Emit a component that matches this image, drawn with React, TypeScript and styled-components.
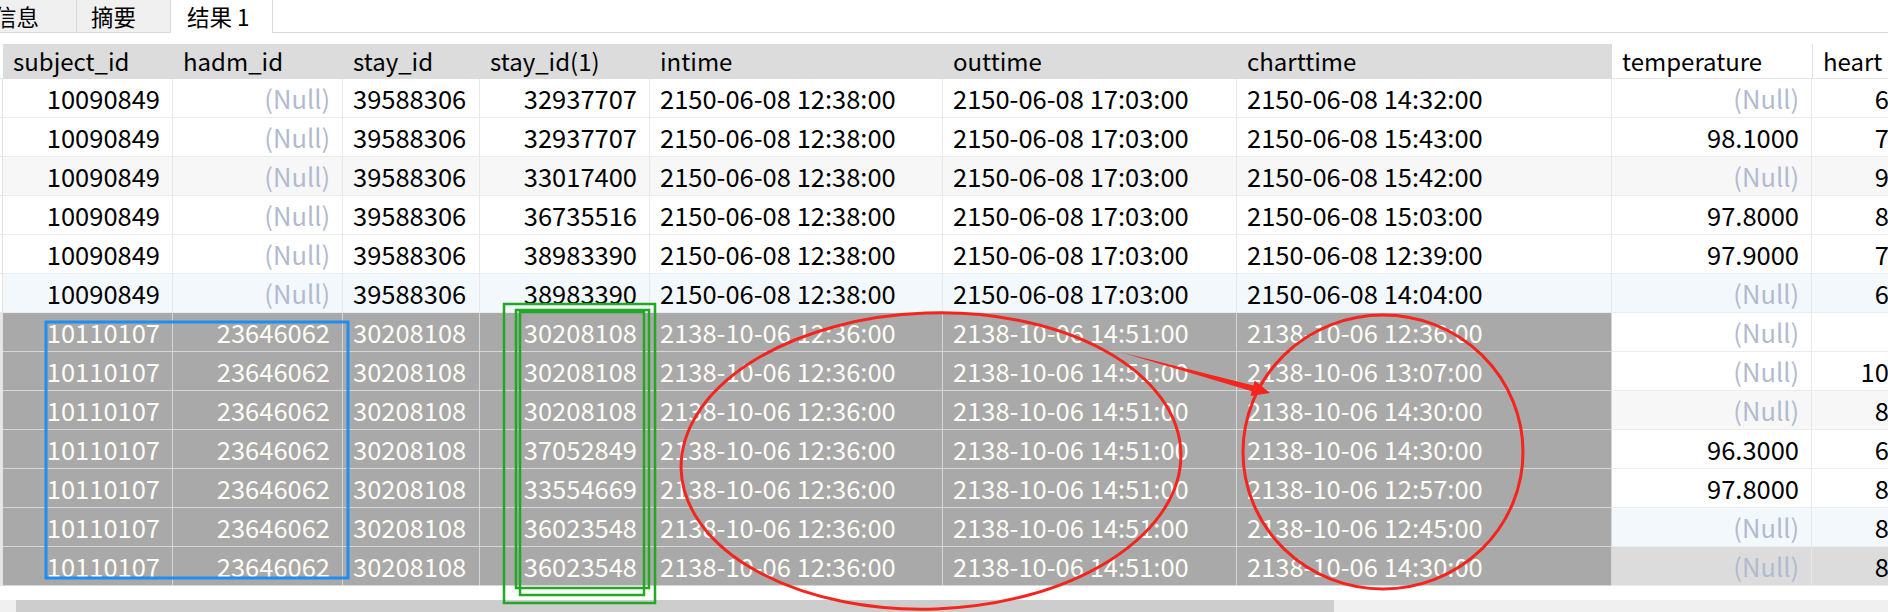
import React from 'react';
import styled, { createGlobalStyle } from 'styled-components';

const GlobalStyle = createGlobalStyle`
  html, body { margin: 0; padding: 0; background: #ffffff; }
  body { font-family: "Noto Sans CJK SC", "Noto Sans", sans-serif; }
`;

const COLS = [3, 170, 170, 137, 170, 293, 294, 375, 200, 104];
const TEMPLATE = COLS.map((c) => `${c}px`).join(' ');

const Page = styled.div`
  position: relative;
  width: 1888px;
  height: 612px;
  overflow: hidden;
  display: flex;
  flex-direction: column;
  background: #ffffff;
  font-family: "Noto Sans CJK SC", "Noto Sans", sans-serif;
`;

const TabBar = styled.div`
  flex: none;
  display: flex;
  height: 33px;
  box-shadow: inset 0 -1px 0 #d9d9d9;
`;

const TabStrip = styled.div`
  display: flex;
  margin-left: -20px;
`;

const Tab = styled.div<{ $w: number; $active?: boolean }>`
  box-sizing: border-box;
  width: ${(p) => p.$w}px;
  height: 33px;
  display: flex;
  align-items: center;
  padding: 0 0 0 ${(p) => (p.$active ? 16 : 14)}px;
  font-size: 22.5px;
  line-height: 1;
  color: #000;
  white-space: nowrap;
  background: ${(p) => (p.$active ? '#ffffff' : '#f0f0f0')};
  border-right: 1px solid #d9d9d9;
  box-shadow: ${(p) => (p.$active ? 'none' : 'inset 0 -1px 0 #d9d9d9')};
`;

const Grid = styled.div`
  flex: none;
  margin-top: 11px;
  display: flex;
  flex-direction: column;
  width: max-content;
`;

const HeaderRow = styled.div`
  display: grid;
  grid-template-columns: ${TEMPLATE};
  height: 35px;
`;

const HeadCell = styled.div<{ $plain?: boolean; $edge?: boolean }>`
  box-sizing: border-box;
  display: flex;
  align-items: center;
  padding: 0 0 0 10px;
  font-size: 24px;
  line-height: 1.2;
  color: #000;
  white-space: nowrap;
  overflow: hidden;
  background: ${(p) => (p.$plain ? '#ffffff' : '#dcdcdc')};
  border-bottom: 1px solid ${(p) => (p.$plain ? '#e6e6e6' : '#dcdcdc')};
  border-left: ${(p) => (p.$edge ? '1px solid #e2e2e2' : 'none')};
`;

const HeadStrip = styled.div`
  background: #ffffff;
  border-bottom: 1px solid #e6e6e6;
`;

const DataRow = styled.div`
  display: grid;
  grid-template-columns: ${TEMPLATE};
  height: 39px;
`;

const Strip = styled.div<{ $sel: boolean }>`
  box-sizing: border-box;
  background: ${(p) => (p.$sel ? '#e6e6e6' : '#ffffff')};
  border-right: 1px solid #e2e2e2;
  border-bottom: 1px solid #e8e8e8;
`;

const Cell = styled.div<{ $sel: boolean; $bg: string; $right: boolean; $null: boolean }>`
  box-sizing: border-box;
  display: flex;
  align-items: center;
  justify-content: ${(p) => (p.$right ? 'flex-end' : 'flex-start')};
  padding: 0 12px 0 10px;
  font-size: 25.5px;
  line-height: 1.2;
  white-space: nowrap;
  overflow: hidden;
  background: ${(p) => (p.$sel ? '#a9a9a9' : p.$bg)};
  color: ${(p) => (p.$sel ? '#fffdf6' : p.$null ? '#b2bad0' : '#000000')};
  border-right: 1px solid ${(p) => (p.$sel ? '#d6d6d6' : '#e8e8e8')};
  border-bottom: 1px solid ${(p) => (p.$sel ? '#d6d6d6' : '#ececec')};
`;

const HScroll = styled.div`
  flex: none;
  margin-top: 14px;
  height: 17px;
  display: flex;
  background: #f0f0f0;
`;

const ScrollBtn = styled.div`
  flex: none;
  width: 16px;
  height: 17px;
  display: flex;
  align-items: flex-end;
`;

const Thumb = styled.div`
  flex: none;
  width: 1318px;
  height: 17px;
  background: #cdcdcd;
`;

const Track = styled.div`
  flex: 1;
`;

const Overlay = styled.svg`
  position: absolute;
  left: 0;
  top: 0;
  pointer-events: none;
`;

type Row = {
  v: (string | null)[];
  bg: string;
  sel: boolean;
};

const A = '2150-06-08 12:38:00';
const B = '2150-06-08 17:03:00';
const C = '2138-10-06 12:36:00';
const D = '2138-10-06 14:51:00';

const WHITE = '#ffffff';
const GRAY = '#f7f7f7';
const BLUE = '#f3f8fd';
const CUR = '#dcdcdc';

const rows: Row[] = [
  { v: ['10090849', null, '39588306', '32937707', A, B, '2150-06-08 14:32:00', null, '68'], bg: WHITE, sel: false },
  { v: ['10090849', null, '39588306', '32937707', A, B, '2150-06-08 15:43:00', '98.1000', '76'], bg: WHITE, sel: false },
  { v: ['10090849', null, '39588306', '33017400', A, B, '2150-06-08 15:42:00', null, '96'], bg: GRAY, sel: false },
  { v: ['10090849', null, '39588306', '36735516', A, B, '2150-06-08 15:03:00', '97.8000', '84'], bg: WHITE, sel: false },
  { v: ['10090849', null, '39588306', '38983390', A, B, '2150-06-08 12:39:00', '97.9000', '72'], bg: WHITE, sel: false },
  { v: ['10090849', null, '39588306', '38983390', A, B, '2150-06-08 14:04:00', null, '64'], bg: BLUE, sel: false },
  { v: ['10110107', '23646062', '30208108', '30208108', C, D, '2138-10-06 12:36:00', null, ''], bg: WHITE, sel: true },
  { v: ['10110107', '23646062', '30208108', '30208108', C, D, '2138-10-06 13:07:00', null, '102'], bg: WHITE, sel: true },
  { v: ['10110107', '23646062', '30208108', '30208108', C, D, '2138-10-06 14:30:00', null, '88'], bg: GRAY, sel: true },
  { v: ['10110107', '23646062', '30208108', '37052849', C, D, '2138-10-06 14:30:00', '96.3000', '66'], bg: WHITE, sel: true },
  { v: ['10110107', '23646062', '30208108', '33554669', C, D, '2138-10-06 12:57:00', '97.8000', '84'], bg: WHITE, sel: true },
  { v: ['10110107', '23646062', '30208108', '36023548', C, D, '2138-10-06 12:45:00', null, '86'], bg: BLUE, sel: true },
  { v: ['10110107', '23646062', '30208108', '36023548', C, D, '2138-10-06 14:30:00', null, '82'], bg: CUR, sel: true },
];

const headers = ['subject_id', 'hadm_id', 'stay_id', 'stay_id(1)', 'intime', 'outtime', 'charttime', 'temperature', 'heart'];
const rightAligned = [true, true, false, true, false, false, false, true, true];

const ArrowChevron: React.FC<{ dir: 'left' | 'right' }> = ({ dir }) => (
  <svg width="16" height="12" viewBox="0 0 16 12">
    {dir === 'left' ? (
      <path d="M4 9 L1 12" stroke="#606060" strokeWidth="1.6" fill="none" />
    ) : (
      <path d="M0 9 L3 12" stroke="#606060" strokeWidth="1.6" fill="none" />
    )}
  </svg>
);

export default function App() {
  return (
    <Page>
      <GlobalStyle />
      <TabBar>
        <TabStrip>
          <Tab $w={97}>信息</Tab>
          <Tab $w={94}>摘要</Tab>
          <Tab $w={102} $active>
            结果 1
          </Tab>
        </TabStrip>
      </TabBar>
      <Grid>
        <HeaderRow>
          <HeadStrip />
          {headers.map((h, i) => (
            <HeadCell key={h} $plain={i >= 7} $edge={i === 8}>
              {h}
            </HeadCell>
          ))}
        </HeaderRow>
        {rows.map((r, ri) => (
          <DataRow key={ri}>
            <Strip $sel={r.sel} />
            {r.v.map((val, ci) => {
              const sel = r.sel && ci <= 6;
              return (
                <Cell
                  key={ci}
                  $sel={sel}
                  $bg={r.bg}
                  $right={rightAligned[ci]}
                  $null={val === null}
                >
                  {val === null ? '(Null)' : val}
                </Cell>
              );
            })}
          </DataRow>
        ))}
      </Grid>
      <HScroll>
        <ScrollBtn>
          <ArrowChevron dir="left" />
        </ScrollBtn>
        <Thumb />
        <Track />
        <ScrollBtn>
          <ArrowChevron dir="right" />
        </ScrollBtn>
      </HScroll>
      <Overlay width="1888" height="612" viewBox="0 0 1888 612">
        <rect x="46" y="322" width="302" height="256" fill="none" stroke="#1e8ff0" strokeWidth="3" />
        <rect x="504" y="304" width="151" height="299" fill="none" stroke="#22a822" strokeWidth="2.5" />
        <rect x="516" y="310" width="133" height="278" fill="none" stroke="#22a822" strokeWidth="2.5" />
        <rect x="520" y="312" width="124" height="283" fill="none" stroke="#22a822" strokeWidth="2.5" />
        <ellipse cx="931" cy="461" rx="250" ry="148" fill="none" stroke="#f5241c" strokeWidth="3" transform="rotate(-2 931 461)" />
        <ellipse cx="1383" cy="452" rx="140" ry="137" fill="none" stroke="#f5241c" strokeWidth="3" />
        <polygon
          points="1120,352 1253.4,385.4 1254.7,380.6 1270,393 1250.5,396 1251.8,391.2"
          fill="#f5241c"
        />
      </Overlay>
    </Page>
  );
}
